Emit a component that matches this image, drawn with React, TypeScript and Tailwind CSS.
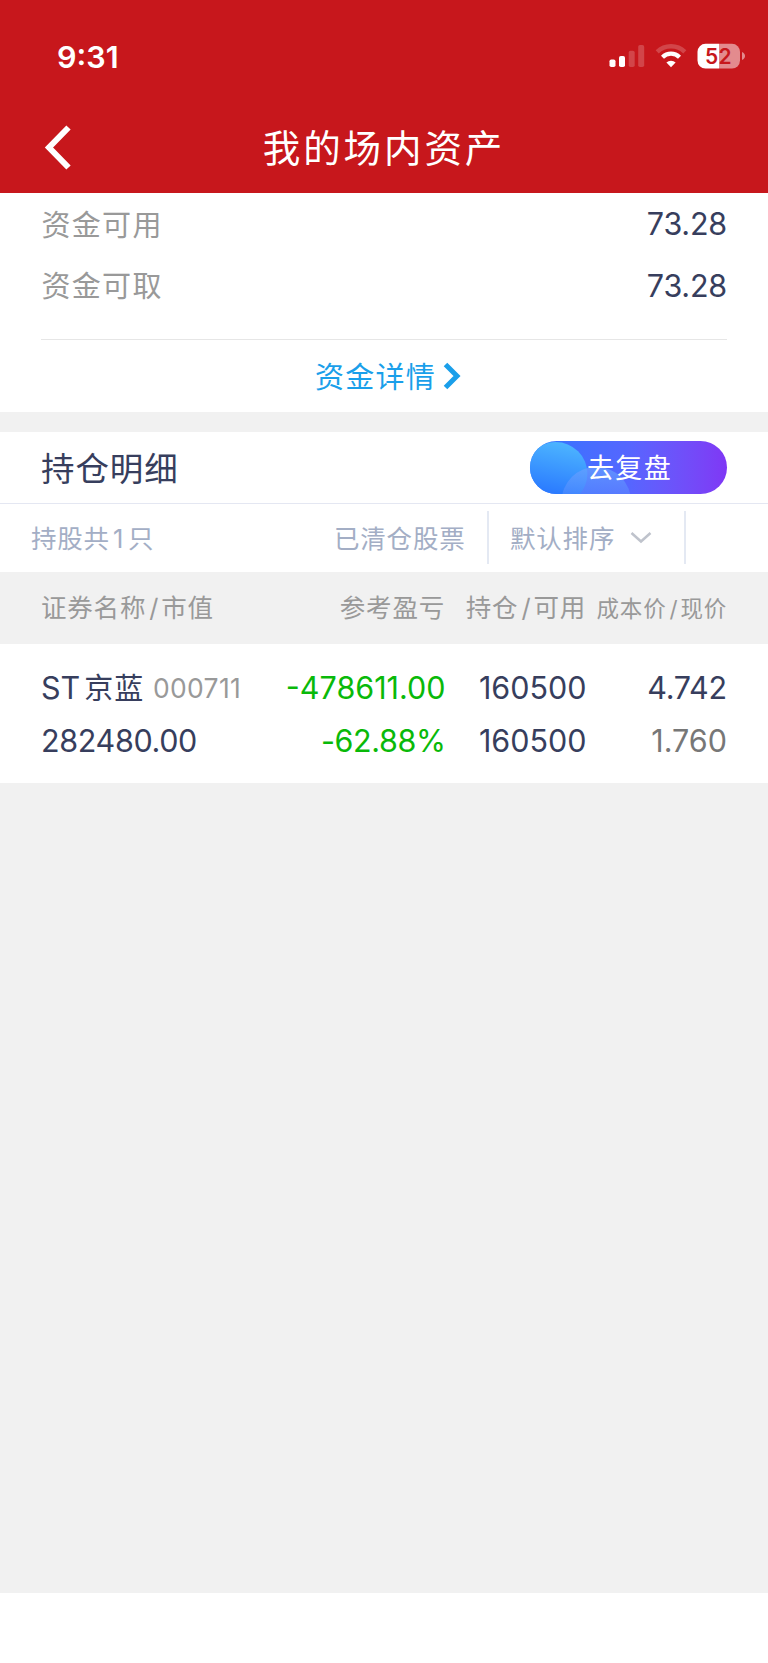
import React from 'react';

function StatusIcons(): React.JSX.Element {
  return (
    <svg className="h-[30px] w-[140px]" viewBox="0 0 140 30" fill="#fff">
      <rect x="1.5" y="16.5" width="6" height="7.5" rx="1.8" />
      <rect x="11" y="13" width="6" height="11" rx="1.8" />
      <rect x="20.7" y="7.8" width="6" height="16.2" rx="1.8" opacity=".2" />
      <rect x="30.2" y="2" width="6" height="22" rx="1.8" opacity=".2" />
      <g fill="none" stroke="#fff">
        <path d="M49.2 8.9a19.5 19.5 0 0 1 27.6 0" strokeWidth="4.4" opacity=".2" />
        <path d="M54.5 14.2a12 12 0 0 1 17 0" strokeWidth="4.2" />
      </g>
      <path d="M58.4 19.6a6.6 6.6 0 0 1 9.2 0L63 24.2z" />
      <path d="M97.5 .8H111V25.5H97.5a8 8 0 0 1-8-8V8.800a8 8 0 0 1 8-8z" />
      <path d="M111 .8h13a8 8 0 0 1 8 8v8.700a8 8 0 0 1-8 8h-13z" opacity=".5" />
      <path d="M134 9c4 1.500 4 6.500 0 8z" opacity=".5" />
      <text x="97" y="20.5" fontFamily="Inter" fontWeight="600" fontSize="21" fill="#c7171c">5</text>
      <text x="110.5" y="20.5" fontFamily="Inter" fontWeight="600" fontSize="21" fill="#c7171c">2</text>
    </svg>
  );
}

function Header(): React.JSX.Element {
  return (
    <header className="h-[192.5px] bg-[#c7171c] text-white">
      <div className="flex h-[100px] items-start justify-between pt-[43px] pr-[20px] pl-[57px]">
        <span className="text-[30.5px] leading-[27px] font-semibold">9:31</span>
        <StatusIcons />
      </div>
      <div className="grid h-[92px] grid-cols-[1fr_auto_1fr] items-center">
        <svg className="mt-[3px] ml-[44px] h-[46px] w-[30px]" viewBox="0 0 30 46" fill="none" stroke="#fff" strokeWidth="6">
          <path d="M24.5 2.5 5 22.5l19.500 20" />
        </svg>
        <h1 className="pt-[5px] text-[37.5px] leading-[40px] tracking-[2.9px]">我的场内资产</h1>
      </div>
    </header>
  );
}

function FundRow({ label, value }: { label: string; value: string }): React.JSX.Element {
  return (
    <div className="flex h-[61.5px] items-center justify-between">
      <span className="pt-[4px] pl-[0.5px] text-[29px] tracking-[1.3px] text-[#999]">{label}</span>
      <span className="pt-[2px] text-[30.5px] tracking-[-0.2px]">{value}</span>
    </div>
  );
}

function Funds(): React.JSX.Element {
  return (
    <section className="h-[219.5px] bg-white px-[41px]">
      <div className="h-[147px] border-b border-[#e6e6e6]">
        <FundRow label="资金可用" value="73.28" />
        <FundRow label="资金可取" value="73.28" />
      </div>
      <div className="flex h-[73px] items-center justify-center gap-[7px] pl-[8px] text-[#1a9fea]">
        <span className="pt-[3px] text-[29px] tracking-[1.3px]">资金详情</span>
        <svg className="h-[28px] w-[18px]" viewBox="0 0 18 28" fill="none" stroke="currentColor" strokeWidth="5">
          <path d="M2.5 2.5 14 14 2.5 25.5" />
        </svg>
      </div>
    </section>
  );
}

function ReviewButton(): React.JSX.Element {
  return (
    <button className="relative flex h-[53.5px] w-[197px] items-center justify-center overflow-hidden rounded-full bg-linear-to-r from-[#2876ff] via-[#5566ff] to-[#7f37f5] text-white">
      <svg className="absolute inset-0 h-full w-full" viewBox="0 0 197 54">
        <defs>
          <linearGradient id="big" x1="0.5" y1="0" x2="0.3" y2="1">
            <stop offset="0" stopColor="#4cb4ff" />
            <stop offset="0.85" stopColor="#2876ff" />
          </linearGradient>
          <linearGradient id="small" x1="0" y1="0" x2="0" y2="1">
            <stop offset="0" stopColor="#68a0ff" stopOpacity=".75" />
            <stop offset="0.7" stopColor="#5888ff" stopOpacity=".2" />
          </linearGradient>
        </defs>
        <circle cx="25" cy="33" r="32" fill="url(#big)" />
        <circle cx="66" cy="61" r="35" fill="url(#small)" />
      </svg>
      <span className="relative pt-[3px] pl-[2px] text-[27px] tracking-[1.4px]">去复盘</span>
    </button>
  );
}

function Filters(): React.JSX.Element {
  return (
    <div className="flex h-[68.5px] items-center pl-[31px] text-[25.5px] tracking-[0.8px] text-[#a3aec5]">
      <span className="w-[303px] pt-[2px]">
        持股共<span className="mr-[4px] ml-[3px]">1</span>只
      </span>
      <span className="w-[153px] pt-[2px]">已清仓股票</span>
      <div className="flex h-[53px] w-[199px] items-center border-x-2 border-[#e4e9f3] pl-[21px]">
        <span className="pt-[2px]">默认排序</span>
        <svg className="ml-[15px] h-[12px] w-[22px]" viewBox="0 0 22 12" fill="none" stroke="#bfc3cc" strokeWidth="2.5">
          <path d="m1.500 1 9.500 8.500 9.500-8.500" />
        </svg>
      </div>
    </div>
  );
}

function Slash(): React.JSX.Element {
  return <span className="mr-[2px] ml-[3px]">/</span>;
}

export default function App(): React.JSX.Element {
  return (
    <div className="flex h-[1663px] w-[768px] flex-col bg-white font-['Inter','Noto_Sans_CJK_SC',sans-serif] whitespace-nowrap text-[#373e5d]">
      <Header />
      <Funds />
      <div className="h-[20px] bg-[#f1f1f1]" />
      <div className="flex h-[71.5px] items-center justify-between border-b border-[#e4e7f2] px-[41px]">
        <h2 className="pt-[4px] text-[33.5px] tracking-[0.9px]">持仓明细</h2>
        <ReviewButton />
      </div>
      <Filters />
      <div className="grid h-[72px] grid-cols-[210px_194px_141px_141px] items-center bg-[#f1f1f1] pt-[1px] pl-[41px] text-right text-[25.5px] tracking-[0.8px] text-[#999]">
        <span className="text-left">
          证券名称<Slash />市值
        </span>
        <span>参考盈亏</span>
        <span>
          持仓<Slash />可用
        </span>
        <span className="text-[22.5px] tracking-[0.8px]">
          成本价<Slash />现价
        </span>
      </div>
      <div className="grid h-[139px] grid-cols-[210px_194.5px_141px_140.5px] grid-rows-[53px_53px] content-center items-center pt-[2px] pl-[41px] text-right text-[30.5px]">
        <span className="text-left">
          ST<span className="ml-[4px] text-[29px] tracking-[0.9px]">京蓝</span>
          <span className="relative -top-px ml-[9px] text-[26.5px] tracking-[0.3px] text-[#999]">000711</span>
        </span>
        <span className="text-[#09b909]">-478611.00</span>
        <span>160500</span>
        <span className="tracking-[-0.2px]">4.742</span>
        <span className="text-left tracking-[-0.35px]">282480.00</span>
        <span className="tracking-[-0.4px] text-[#09b909]">-62.88%</span>
        <span>160500</span>
        <span className="text-[#777]">1.760</span>
      </div>
      <div className="h-[810px] bg-[#f1f1f1]" />
    </div>
  );
}
